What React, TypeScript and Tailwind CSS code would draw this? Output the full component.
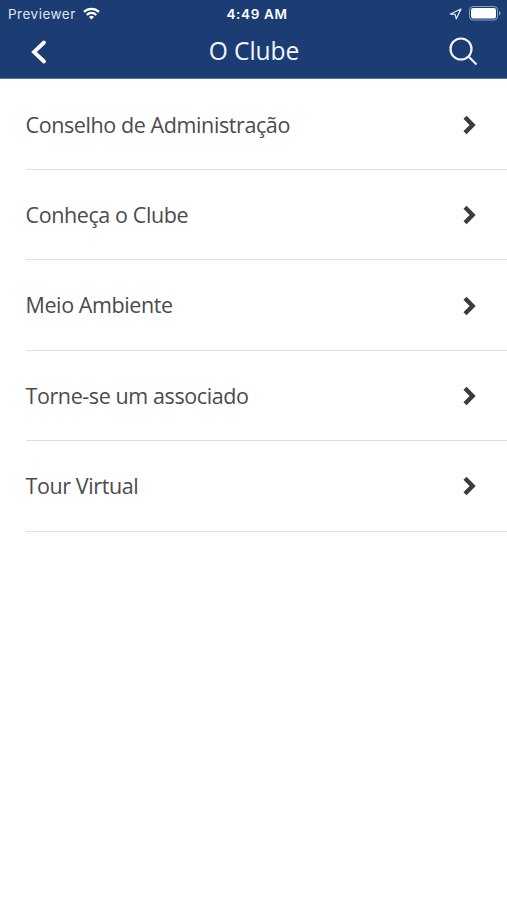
const items = [
  "Conselho de Administração",
  "Conheça o Clube",
  "Meio Ambiente",
  "Torne-se um associado",
  "Tour Virtual",
];

function StatusBar() {
  return (
    <div className="flex h-[27px] items-center justify-between pl-2 pr-1.5 font-['Inter',sans-serif] text-[13.5px] text-white">
      <div className="flex w-[120px] items-center gap-[7px]">
        <span className="pt-px tracking-[0.5px] text-[#dfe6f3]">Previewer</span>
        <svg width="17" height="13" viewBox="0 0 17 13" fill="none" stroke="currentColor" strokeWidth="2.2">
          <path d="M1 4.9a10.6 10.6 0 0 1 15 0" />
          <path d="M3.8 7.9a6.6 6.6 0 0 1 9.4 0" />
          <path d="M8.5 12.6 6 10.1a3.5 3.5 0 0 1 5 0z" fill="currentColor" stroke="none" />
        </svg>
      </div>
      <span className="pl-[5px] pt-px font-semibold tracking-[0.65px]">4:49 AM</span>
      <div className="flex w-[120px] items-center justify-end gap-[7px]">
        <svg width="13" height="12" viewBox="0 0 13 12" fill="none" stroke="#dfe6f3" strokeWidth="1.3" strokeLinejoin="round">
          <path d="M12 1 1.5 6l4.6.3 1.2 4.5z" />
        </svg>
        <svg width="32" height="15" viewBox="0 0 32 15" fill="none">
          <rect x="0.5" y="0.5" width="28" height="13.5" rx="3.5" stroke="currentColor" strokeOpacity="0.5" />
          <rect x="2" y="2" width="25" height="10.5" rx="2" fill="currentColor" />
          <path d="M30 5a2.4 2.4 0 0 1 0 4.5z" fill="currentColor" fillOpacity="0.5" />
        </svg>
      </div>
    </div>
  );
}

function NavBar() {
  return (
    <div className="flex h-[49px] items-center justify-between pl-[30px] pr-[29px] text-white">
      <svg width="29" height="26" viewBox="0 0 29 26" fill="none" stroke="currentColor" strokeWidth="3.8" strokeLinecap="round">
        <path d="M14 3.5 4 13l10 9.5" />
      </svg>
      <h1 className="text-[24.6px] leading-none tracking-[-0.1px] text-[#f1f5fc]">O Clube</h1>
      <svg width="29" height="29" viewBox="0 0 29 29" fill="none" stroke="#f1f5fc" strokeWidth="2.2">
        <circle cx="12" cy="12" r="10.5" />
        <path d="m19.5 19.5 8 8" />
      </svg>
    </div>
  );
}

export default function App() {
  return (
    <div className="min-h-[900px] w-full bg-white font-['Open_Sans','Noto_Sans',sans-serif]">
      <header className="h-[79px] border-b border-[#5873a2] bg-[#1c3c74]">
        <StatusBar />
        <NavBar />
      </header>
      <ul className="pl-[25.5px] pt-[0.6px]">
        {items.map((item) => (
          <li
            key={item}
            className="flex h-[90.4px] items-center justify-between border-b border-[#dedede] pr-[30px] pt-px text-[21.5px] tracking-[-0.4px] text-[#4b4b4b]"
          >
            <span>{item}</span>
            <svg width="15" height="20" viewBox="0 0 15 20" fill="none" stroke="#3c3c3c" strokeWidth="4.4">
              <path d="m3 2.2 7.6 7.8L3 17.800" />
            </svg>
          </li>
        ))}
      </ul>
    </div>
  );
}
